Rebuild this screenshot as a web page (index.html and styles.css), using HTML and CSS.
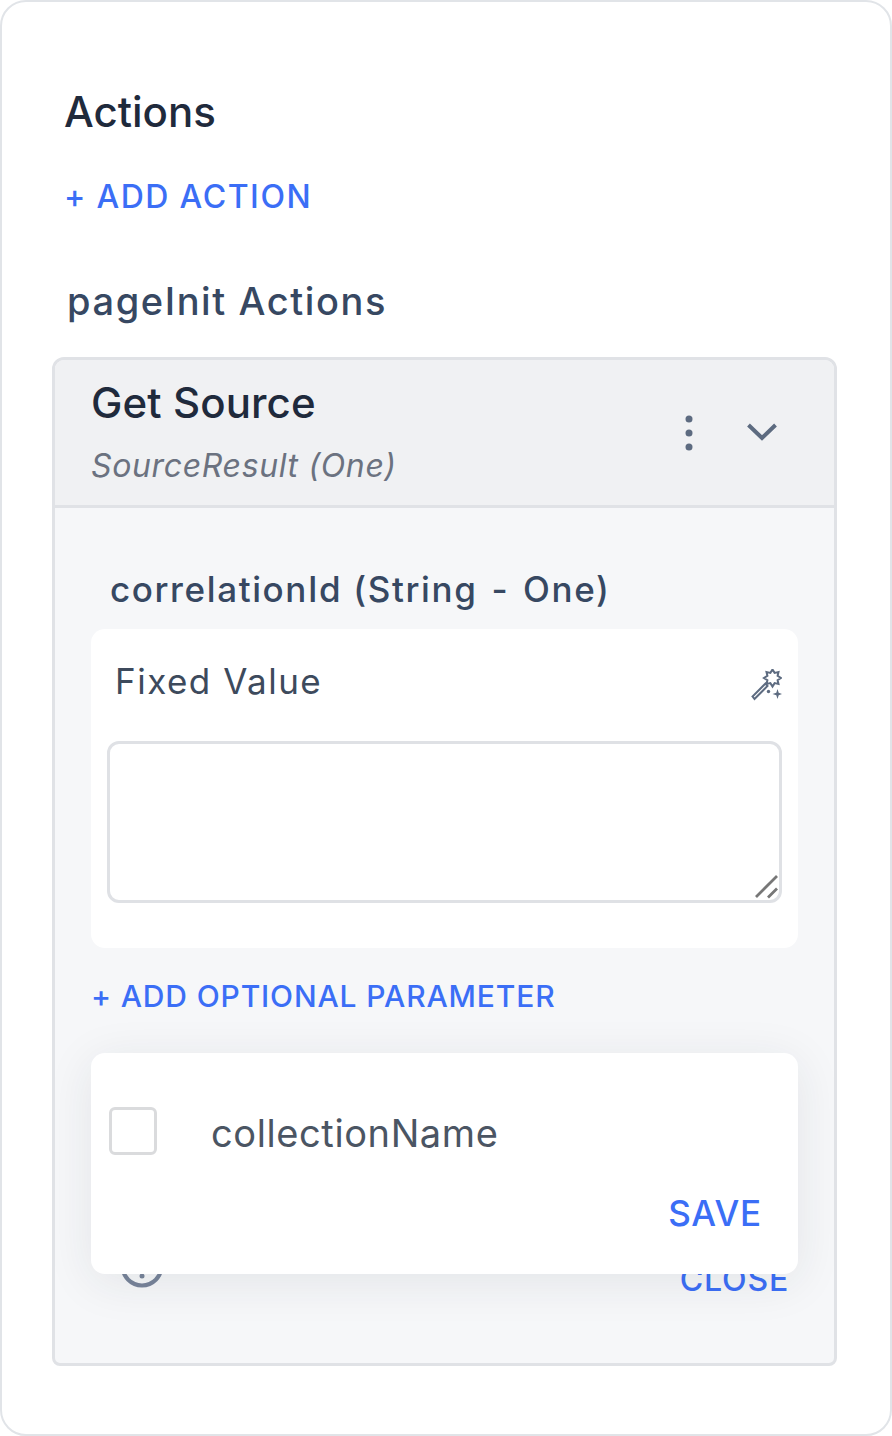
FILE: index.html
```html
<!DOCTYPE html>
<html lang="en">
<head>
<meta charset="utf-8">
<title>Actions</title>
<link rel="stylesheet" href="styles.css">
</head>
<body>
<main class="sheet">
  <h2 class="title">Actions</h2>
  <a class="add-action">+ ADD ACTION</a>
  <h3 class="subtitle">pageInit Actions</h3>
  <section class="panel">
    <header class="panel-head">
      <div class="panel-titles">
        <div class="panel-name">Get Source</div>
        <div class="panel-type">SourceResult (One)</div>
      </div>
      <svg class="dots" width="10" height="38" viewBox="0 0 10 38"><circle cx="5" cy="5" r="3.500"/><circle cx="5" cy="19" r="3.500"/><circle cx="5" cy="33" r="3.500"/></svg>
      <svg class="chev" width="32" height="20" viewBox="0 0 32 20"><path d="M2.500 3 L16 16 L29.500 3"/></svg>
    </header>
    <div class="panel-body">
      <div class="param-label">correlationId (String <span class="dash">-</span> One)</div>
      <div class="param-card">
        <div class="param-row">
          <span class="param-kind">Fixed Value</span>
          <svg class="wand" width="32" height="32" viewBox="0 0 32 32">
            <path class="wand-line" d="M2.500 27.500 L4.500 30 L17.500 17 L15.500 14.500 Z"/>
            <path class="wand-line" d="M31 9 L27.600 11.100 L28.500 15 L24.600 14.100 L22.500 17.500 L20.400 14.100 L16.500 15 L17.400 11.100 L14 9 L17.400 6.900 L16.500 3 L20.400 3.900 L22.500 .5 L24.600 3.900 L28.500 3 L27.600 6.900 Z"/>
            <path class="wand-star" d="M27.500 20 L28.700 23.800 L32 25 L28.700 26.200 L27.500 30 L26.300 26.200 L22.500 25 L26.300 23.800 Z"/>
            <circle class="wand-star" cx="18.500" cy="22.500" r="1.700"/>
          </svg>
        </div>
        <div class="textbox">
          <svg class="grip" width="26" height="26" viewBox="0 0 26 26"><path d="M3 23 L24 2 M15 23.500 L24 14.500"/></svg>
        </div>
      </div>
      <a class="add-param">+ ADD OPTIONAL PARAMETER</a>
      <footer class="panel-foot">
        <svg class="info" width="44" height="44" viewBox="0 0 44 44"><circle cx="22" cy="22" r="19.500"/><path d="M22 11 V23"/><circle class="info-dot" cx="22" cy="32" r="2.500"/></svg>
        <a class="close">CLOSE</a>
      </footer>
      <div class="popover">
        <label class="option">
          <span class="check"></span>
          <span class="option-name">collectionName</span>
        </label>
        <a class="save">SAVE</a>
      </div>
    </div>
  </section>
</main>
</body>
</html>
```
FILE: styles.css
```css
* { box-sizing: border-box; }
html, body { margin: 0; padding: 0; background: #fff; }
body { width: 892px; height: 1436px; font-family: Inter, "Liberation Sans", sans-serif; overflow: hidden; }
.sheet { width: 892px; height: 1436px; border: 2px solid #e1e4e8; border-radius: 26px; padding: 86px 53px 0 50px; background: #fff; display: flex; flex-direction: column; align-items: flex-start; }
.title { margin: 0 0 0 12px; font-size: 42px; line-height: 48px; font-weight: 500; color: #1f2a3c; }
.add-action { margin: 41px 0 0 12px; font-size: 32px; line-height: 40px; font-weight: 500; color: #3b6ef6; letter-spacing: 1.550px; word-spacing: -0.500px; }
.subtitle { margin: 62px 0 0 15px; font-size: 38px; line-height: 44px; font-weight: 500; color: #374862; letter-spacing: 1.600px; }
.panel { width: 785px; height: 1009px; margin-top: 34px; border: 3px solid #e0e2e6; border-radius: 12px 12px 8px 8px; background: #f6f7f9; display: flex; flex-direction: column; overflow: hidden; }
.panel-head { height: 148px; background: #f0f1f3; border-bottom: 3px solid #e0e2e6; display: flex; align-items: center; padding: 0 56px 0 36px; flex-shrink: 0; }
.panel-titles { flex: 1; }
.panel-name { font-size: 42px; line-height: 48px; font-weight: 500; color: #1f2a3c; letter-spacing: 0.100px; }
.panel-type { font-size: 32px; line-height: 40px; font-style: italic; color: #6b7280; margin-top: 19px; letter-spacing: 0.650px; }
.dots { fill: #5d6b80; margin-right: 52px; }
.chev { fill: none; stroke: #5d6b80; stroke-width: 4; margin-top: -1px; }
.panel-body { position: relative; flex: 1; padding: 59px 36px 0; }
.param-label { margin-left: 19px; font-size: 35px; line-height: 44px; font-weight: 500; color: #374862; letter-spacing: 1.600px; }
.dash { margin: 0 3px; }
.param-card { margin-top: 18px; width: 707px; height: 319px; background: #fff; border-radius: 14px; padding: 28px 16px 0; }
.param-row { display: flex; justify-content: space-between; align-items: flex-start; height: 84px; }
.param-kind { margin-left: 8px; font-size: 35px; line-height: 48px; font-weight: 400; color: #3d4a5c; letter-spacing: 1.500px; }
.wand { margin-top: 12px; flex-shrink: 0; }
.wand-line { fill: none; stroke: #5d6b80; stroke-width: 2; }
.wand-star { fill: #5d6b80; }
.textbox { position: relative; height: 162px; border: 3px solid #dfe1e5; border-radius: 12px; background: #fff; }
.grip { position: absolute; right: 0; bottom: 0; fill: none; stroke: #777; stroke-width: 2.800; }
.add-param { display: block; margin-top: 28px; font-size: 30px; line-height: 40px; font-weight: 500; color: #3b6ef6; letter-spacing: 0.850px; }
.panel-foot { display: flex; justify-content: space-between; align-items: flex-start; margin-top: 228px; padding: 0 9px 0 29px; }
.info { fill: none; stroke: #78849a; stroke-width: 4; }
.info-dot { fill: #78849a; stroke: none; }
.close { margin-top: 16px; font-size: 32px; line-height: 40px; font-weight: 500; color: #3b6ef6; letter-spacing: 0.800px; }
.popover { position: absolute; left: 36px; top: 545px; width: 707px; height: 221px; background: #fff; border-radius: 14px; box-shadow: 0 8px 48px rgba(31, 41, 55, 0.09); padding: 54px 36px 0 18px; display: flex; flex-direction: column; }
.option { display: flex; align-items: flex-start; }
.check { width: 48px; height: 48px; border: 3px solid #dadbdd; border-radius: 6px; background: #fff; flex-shrink: 0; }
.option-name { margin: 2px 0 0 54px; font-size: 38px; line-height: 48px; color: #4b5563; letter-spacing: 0.600px; }
.save { align-self: flex-end; margin-top: 34px; font-size: 35px; line-height: 44px; font-weight: 500; color: #3b6ef6; letter-spacing: 0.800px; }
```
